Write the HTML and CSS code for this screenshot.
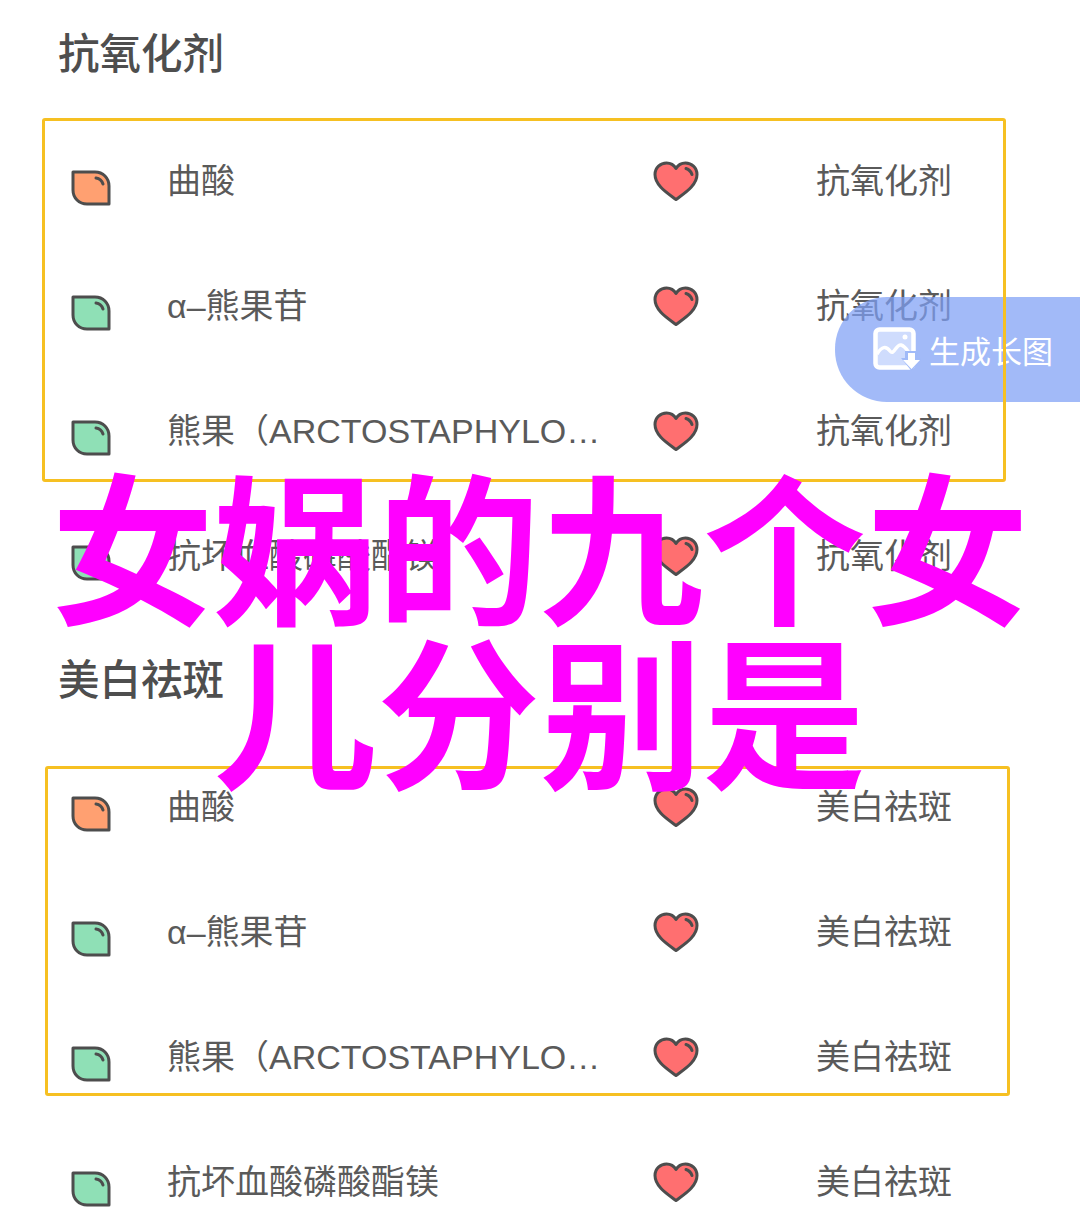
FILE: index.html
```html
<!DOCTYPE html>
<html lang="zh-CN">
<head>
<meta charset="utf-8">
<title>女娲的九个女儿分别是</title>
<link rel="stylesheet" href="styles.css">
</head>
<body>
<svg class="defs" width="0" height="0" aria-hidden="true">
  <defs>
    <symbol id="leaf" viewBox="0 0 40 36">
      <path class="leaf-shape" d="M2 2H24C32 2 38 8 38 16V34H16C8 34 2 28 2 20Z"/>
      <path class="ink" d="M25 8C28 8.500 31 11 32 14"/>
    </symbol>
    <symbol id="heart" viewBox="0 0 46 41">
      <path class="heart-shape" d="M23 38.500C16 33 2 25 2 13.500C2 6.500 7.500 2 13.500 2C17.500 2 21 4 23 7.500C25 4 28.500 2 32.500 2C38.500 2 44 6.500 44 13.500C44 25 30 33 23 38.500Z"/>
      <path class="ink" d="M33 7.500C36 8.500 38 10.500 39 13.500"/>
    </symbol>
  </defs>
</svg>
<main class="page">
  <h2 class="heading heading-first">抗氧化剂</h2>
  <ul class="list">
    <li class="row"><svg class="leaf orange"><use href="#leaf"/></svg><span class="name">曲酸</span><svg class="heart"><use href="#heart"/></svg><span class="tag">抗氧化剂</span></li>
    <li class="row"><svg class="leaf green"><use href="#leaf"/></svg><span class="name">α–熊果苷</span><svg class="heart"><use href="#heart"/></svg><span class="tag">抗氧化剂</span></li>
    <li class="row"><svg class="leaf green"><use href="#leaf"/></svg><span class="name">熊果（ARCTOSTAPHYLOS UVA-URSI）</span><svg class="heart"><use href="#heart"/></svg><span class="tag">抗氧化剂</span></li>
    <li class="row"><svg class="leaf green"><use href="#leaf"/></svg><span class="name">抗坏血酸磷酸酯镁</span><svg class="heart"><use href="#heart"/></svg><span class="tag">抗氧化剂</span></li>
  </ul>
  <h2 class="heading heading-second">美白祛斑</h2>
  <ul class="list">
    <li class="row"><svg class="leaf orange"><use href="#leaf"/></svg><span class="name">曲酸</span><svg class="heart"><use href="#heart"/></svg><span class="tag">美白祛斑</span></li>
    <li class="row"><svg class="leaf green"><use href="#leaf"/></svg><span class="name">α–熊果苷</span><svg class="heart"><use href="#heart"/></svg><span class="tag">美白祛斑</span></li>
    <li class="row"><svg class="leaf green"><use href="#leaf"/></svg><span class="name">熊果（ARCTOSTAPHYLOS UVA-URSI）</span><svg class="heart"><use href="#heart"/></svg><span class="tag">美白祛斑</span></li>
    <li class="row"><svg class="leaf green"><use href="#leaf"/></svg><span class="name">抗坏血酸磷酸酯镁</span><svg class="heart"><use href="#heart"/></svg><span class="tag">美白祛斑</span></li>
  </ul>

  <div class="fab">
    <svg class="fab-icon" viewBox="0 0 48 46" aria-hidden="true">
      <rect class="fab-photo" x="3" y="3" width="36" height="36"/>
      <rect class="fab-frame" x="2.500" y="2.500" width="38" height="38" rx="4"/>
      <circle class="fab-sun" cx="32" cy="10" r="2.500"/>
      <path class="fab-hills" d="M4 27C9 19 13 19 17 24C21 29 23 17 28 18C32 19 34 23 36 26"/>
      <path class="fab-cut" d="M32 24H45V31H49L38.500 44L28 31H32Z"/>
      <path class="fab-arrow" d="M35 26H42V33H47L38.500 42L30 33H35Z"/>
    </svg>
    <span class="fab-label">生成长图</span>
  </div>

  <div class="frame frame-one"></div>
  <div class="frame frame-two"></div>

  <h1 class="banner">女娲的九个女儿分别是</h1>
</main>
</body>
</html>
```

FILE: styles.css
```css
* { box-sizing: border-box; }

html, body {
  margin: 0;
  padding: 0;
  background: #fff;
}

body {
  font-family: "Liberation Sans", "Noto Sans CJK SC", sans-serif;
  color: #5a5a5a;
}

.defs { position: absolute; }

.page {
  position: relative;
  width: 1080px;
  height: 1226px;
  overflow: hidden;
}

.heading {
  margin: 0;
  padding-left: 58px;
  display: flex;
  align-items: center;
  font-size: 41.500px;
  font-weight: 500;
  line-height: 1;
  color: #4e4e4e;
}

.heading-first { height: 110px; margin-bottom: 8px; }
.heading-second { height: 126px; }

.list {
  list-style: none;
  margin: 0;
  padding: 0;
}

.row {
  height: 125px;
  display: grid;
  grid-template-columns: 96px 486px 163px auto;
  align-items: center;
  padding-left: 71px;
  font-size: 34px;
  line-height: 1;
}

.leaf {
  width: 40px;
  height: 36px;
  margin-top: 14px;
  --leaf-fill: #8fe0b6;
}

.orange { --leaf-fill: #ffa071; }

.leaf-shape, .heart-shape, .ink {
  stroke: #4d4d4d;
  stroke-width: 3;
  stroke-linejoin: round;
}

.leaf-shape { fill: var(--leaf-fill); }

.ink { fill: none; stroke-linecap: round; }

.name {
  width: 436px;
  white-space: nowrap;
  overflow: hidden;
  text-overflow: ellipsis;
}

.heart {
  width: 46px;
  height: 41px;
  margin-top: 2px;
}

.heart-shape { fill: #ff6f70; }

.tag {
  white-space: nowrap;
}

.fab {
  position: absolute;
  top: 297px;
  right: 0;
  width: 245px;
  height: 105px;
  display: flex;
  align-items: center;
  gap: 8px;
  padding-left: 38px;
  border-radius: 52px 0 0 52px;
  background: rgba(126, 160, 245, 0.72);
}

.fab-icon { width: 48px; height: 46px; flex: none; }

.fab-frame { fill: none; stroke: #fff; stroke-width: 4.500; }
.fab-photo { fill: #cfdcfd; }
.fab-sun { fill: #fff; }
.fab-hills { fill: none; stroke: #fff; stroke-width: 3.500; stroke-linejoin: round; }
.fab-cut { fill: #a0baf8; }
.fab-arrow { fill: #fff; }

.fab-label {
  font-family: "Noto Sans CJK SC", sans-serif;
  font-size: 31px;
  line-height: 1;
  color: #fff;
  white-space: nowrap;
}

.frame {
  position: absolute;
  border: 3px solid #f6c022;
  border-radius: 3px;
  pointer-events: none;
}

.frame-one { left: 42px; top: 118px; width: 964px; height: 364px; }
.frame-two { left: 45px; top: 766px; width: 965px; height: 330px; }

.banner {
  position: absolute;
  left: 0;
  top: 459px;
  width: 1080px;
  margin: 0;
  font-family: "Noto Sans CJK SC", sans-serif;
  font-size: 163px;
  font-weight: 700;
  line-height: 164px;
  text-align: center;
  color: #ff00ff;
}
```
